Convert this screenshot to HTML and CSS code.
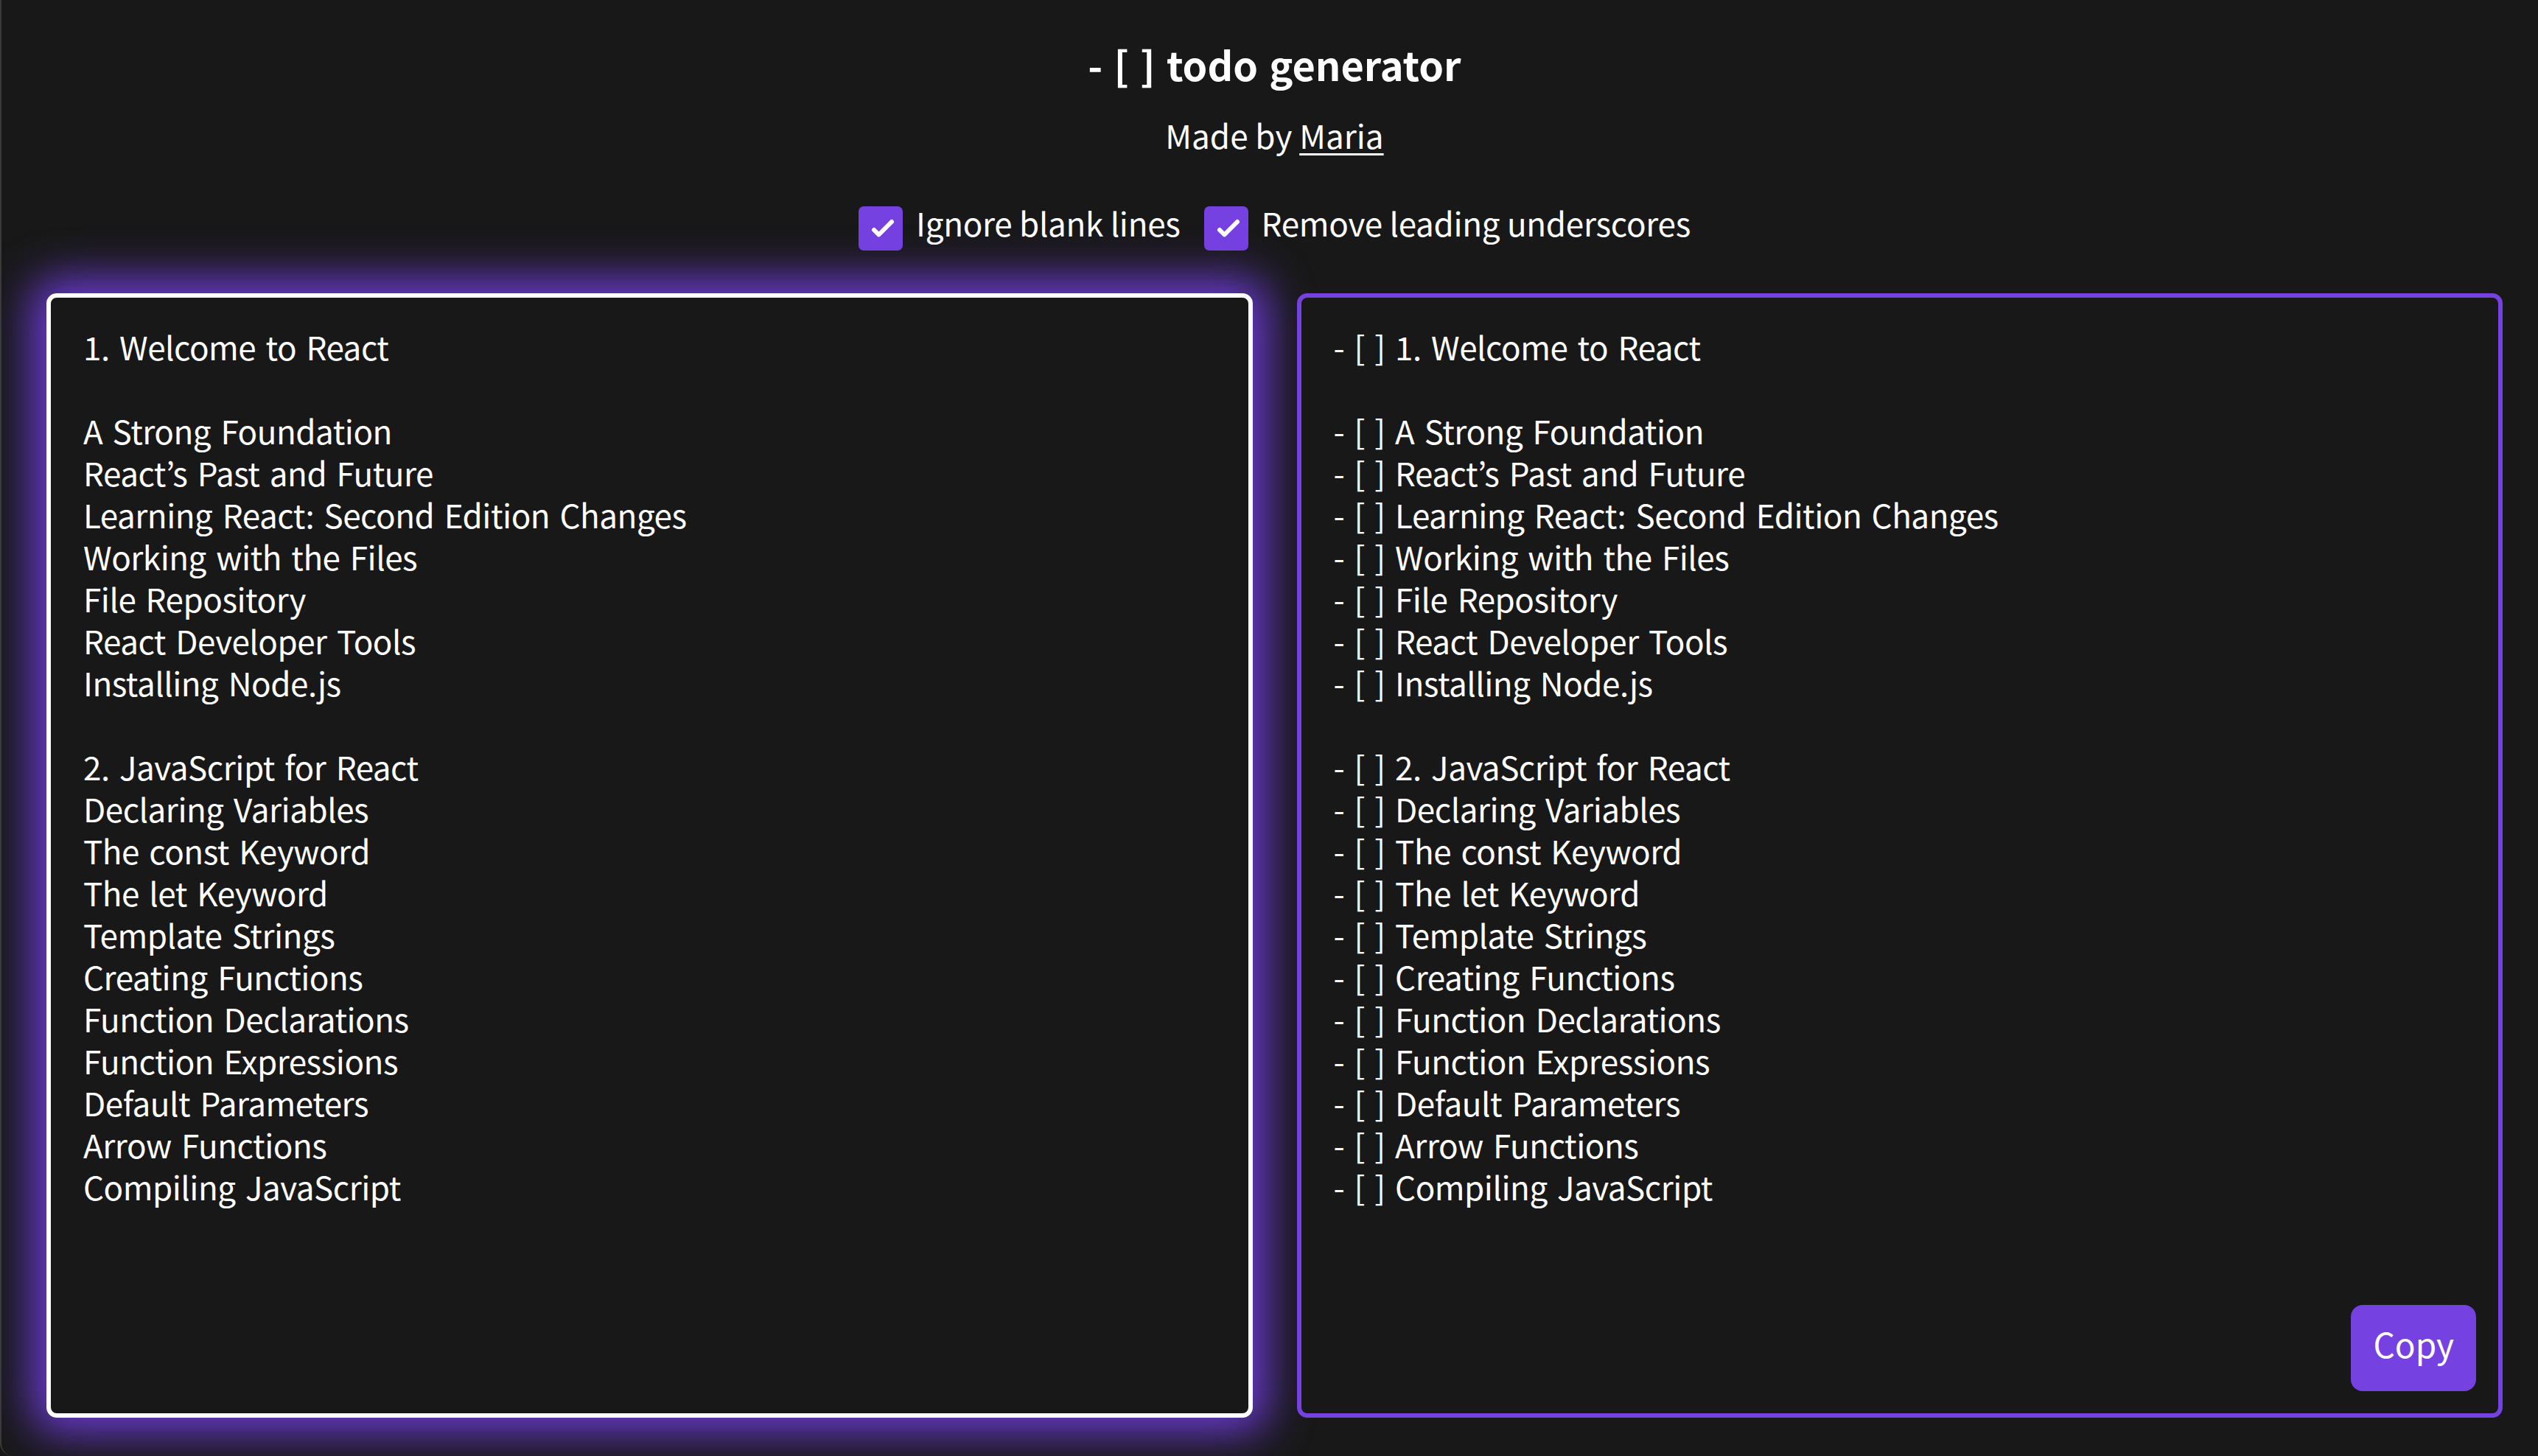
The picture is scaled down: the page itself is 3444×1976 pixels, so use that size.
FILE: index.html
```html
<!DOCTYPE html>
<html lang="en">
<head>
<meta charset="utf-8">
<title>- [ ] todo generator</title>
<link rel="stylesheet" href="styles.css">
</head>
<body>
<div class="page">
  <header class="header">
    <h1 class="title">- [ ] todo generator</h1>
    <p class="byline">Made by <a class="author" href="#">Maria</a></p>
    <div class="options">
      <label class="option">
        <span class="check"><svg viewBox="0 0 60 60" width="60" height="60"><path d="M21 32 L27.5 38.5 L45 21" fill="none" stroke="#fff" stroke-width="6" stroke-linecap="round" stroke-linejoin="round"/></svg></span>
        <span class="option-text">Ignore blank lines</span>
      </label>
      <label class="option">
        <span class="check"><svg viewBox="0 0 60 60" width="60" height="60"><path d="M21 32 L27.5 38.5 L45 21" fill="none" stroke="#fff" stroke-width="6" stroke-linecap="round" stroke-linejoin="round"/></svg></span>
        <span class="option-text">Remove leading underscores</span>
      </label>
    </div>
  </header>
  <main class="panes">
    <div class="pane pane-input">
      <textarea class="editor editor-input" spellcheck="false">1. Welcome to React

A Strong Foundation
React’s Past and Future
Learning React: Second Edition Changes
Working with the Files
File Repository
React Developer Tools
Installing Node.js

2. JavaScript for React
Declaring Variables
The const Keyword
The let Keyword
Template Strings
Creating Functions
Function Declarations
Function Expressions
Default Parameters
Arrow Functions
Compiling JavaScript</textarea>
    </div>
    <div class="pane pane-output">
      <textarea class="editor editor-output" readonly spellcheck="false">- [ ] 1. Welcome to React

- [ ] A Strong Foundation
- [ ] React’s Past and Future
- [ ] Learning React: Second Edition Changes
- [ ] Working with the Files
- [ ] File Repository
- [ ] React Developer Tools
- [ ] Installing Node.js

- [ ] 2. JavaScript for React
- [ ] Declaring Variables
- [ ] The const Keyword
- [ ] The let Keyword
- [ ] Template Strings
- [ ] Creating Functions
- [ ] Function Declarations
- [ ] Function Expressions
- [ ] Default Parameters
- [ ] Arrow Functions
- [ ] Compiling JavaScript</textarea>
      <button class="copy-btn" type="button">Copy</button>
    </div>
  </main>
</div>
</body>
</html>
```

FILE: styles.css
```css
* {
  box-sizing: border-box;
}

html, body {
  margin: 0;
  padding: 0;
  background: #181818;
}

body {
  font-family: "Noto Sans CJK KR", "Noto Sans", sans-serif;
  color: #ffffff;
}

.page {
  height: 1976px;
  display: flex;
  flex-direction: column;
  padding: 54px 48px 52px 61px;
  border-left: 2px solid #3a3a3a;
  border-bottom-left-radius: 18px;
  overflow: hidden;
}

.header {
  display: flex;
  flex-direction: column;
  align-items: center;
}

.title {
  margin: 0;
  font-size: 54px;
  line-height: 65px;
  font-weight: 700;
  word-spacing: 3px;
}

.byline {
  margin: 36px 0 0;
  font-size: 44px;
  line-height: 57px;
}

.author {
  color: #ffffff;
  text-decoration: underline;
  text-decoration-thickness: 3px;
  text-underline-offset: 6px;
}

.options {
  display: flex;
  align-items: center;
  gap: 32px;
  margin-top: 62px;
}

.option {
  display: flex;
  align-items: center;
  gap: 18px;
  font-size: 44px;
  line-height: 57px;
  letter-spacing: -0.3px;
}

.option-text {
  margin-bottom: 15px;
}

.check {
  width: 60px;
  height: 60px;
  border-radius: 7px;
  background: #7641e1;
  display: block;
}

.check svg {
  display: block;
}

.panes {
  flex: 1;
  display: flex;
  gap: 60px;
  margin-top: 52px;
  min-height: 0;
}

.pane {
  flex: 1;
  position: relative;
  display: flex;
  border-radius: 14px;
}

.pane-input {
  box-shadow: 0 0 60px 20px rgba(108, 60, 212, 1);
}

.editor {
  flex: 1;
  width: 100%;
  resize: none;
  margin: 0;
  padding: 38px 44px;
  border-radius: 14px;
  background: #181818;
  color: #ffffff;
  font-family: "Noto Sans CJK KR", "Noto Sans", sans-serif;
  font-size: 44px;
  line-height: 57px;
  letter-spacing: -0.5px;
  word-spacing: 4px;
  outline: none;
  overflow: hidden;
}

.editor-input {
  border: 6px solid #ffffff;
}

.editor-output {
  border: 6px solid #7641e1;
}

.copy-btn {
  position: absolute;
  right: 36px;
  bottom: 36px;
  height: 117px;
  padding: 0 30px 14px;
  border: none;
  border-radius: 16px;
  background: #7641e1;
  color: #ffffff;
  font-family: "Noto Sans CJK KR", "Noto Sans", sans-serif;
  font-size: 46px;
  cursor: pointer;
}
```
